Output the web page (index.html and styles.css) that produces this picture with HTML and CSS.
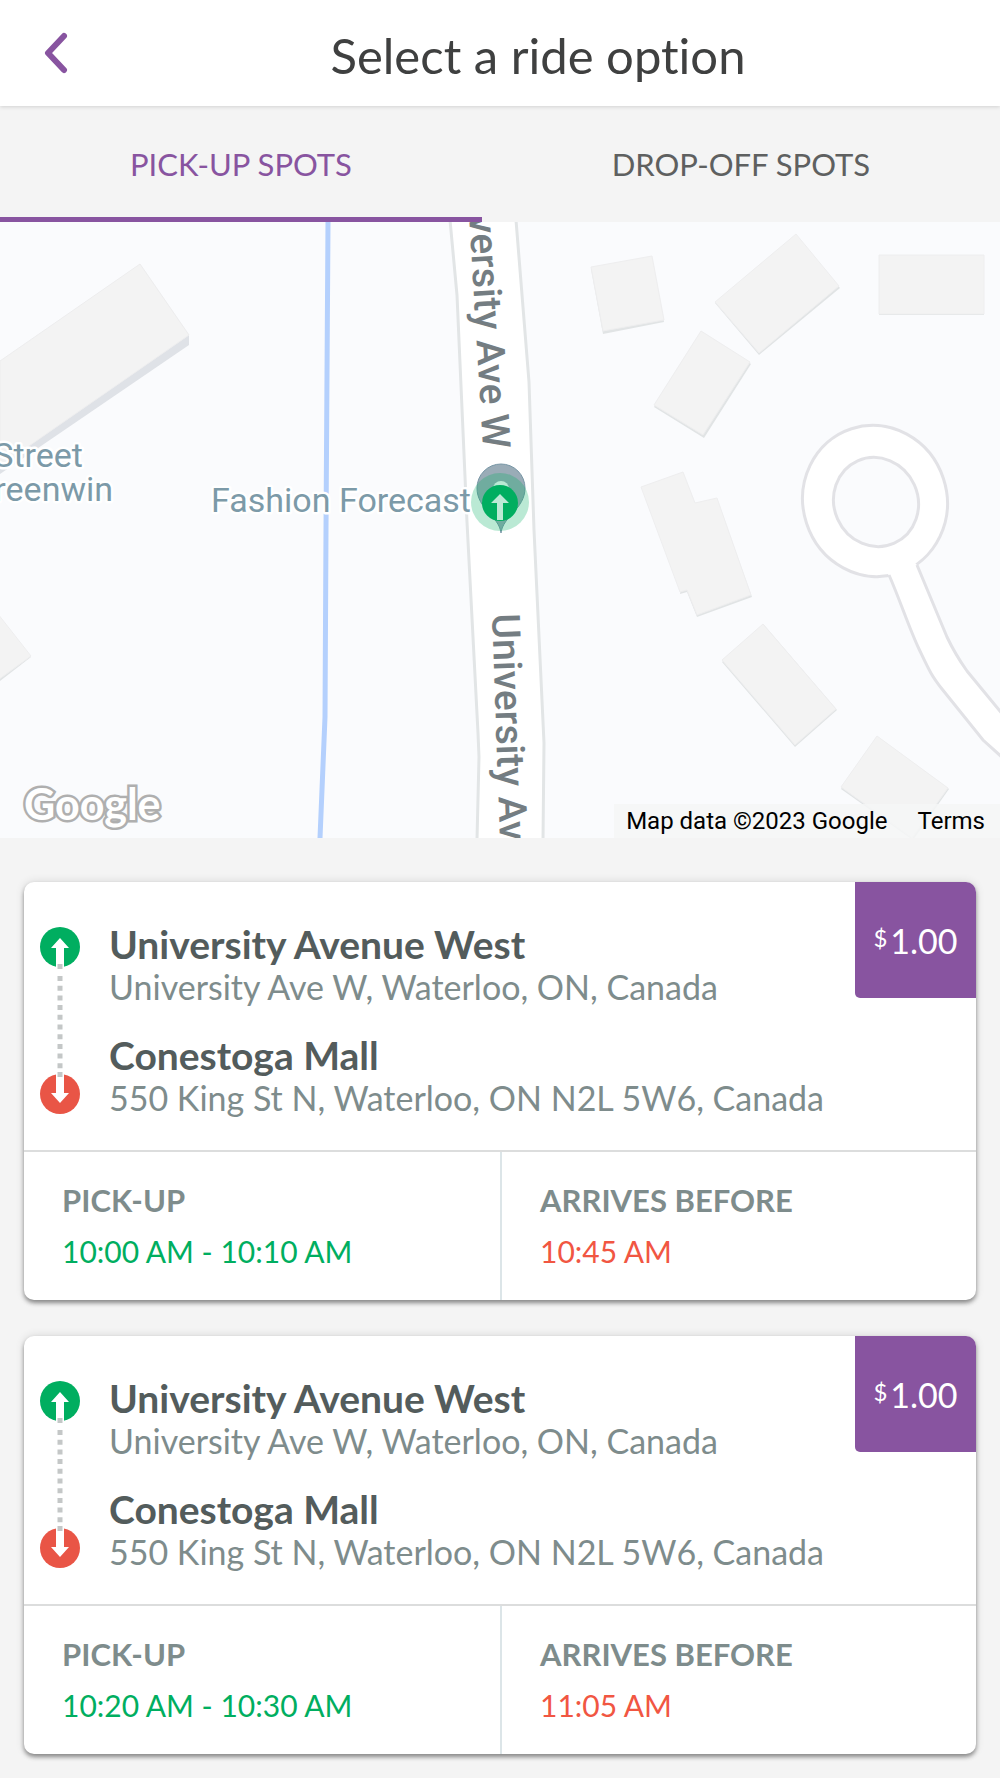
FILE: index.html
```html
<!DOCTYPE html>
<html lang="en">
<head>
<meta charset="utf-8">
<meta name="viewport" content="width=device-width, initial-scale=1">
<title>Select a ride option</title>
<link rel="stylesheet" href="styles.css">
</head>
<body>
<svg class="defs" aria-hidden="true">
  <symbol id="route" viewBox="0 0 40 188">
    <circle cx="20" cy="20" r="20" fill="#00ae60"/>
    <path d="M20 11 29 21H24V40H16V21H11Z" fill="#fff"/>
    <circle cx="20" cy="167" r="20" fill="#e95546"/>
    <path d="M20 176 29 166H24V147H16V166H11Z" fill="#fff"/>
    <path d="M20 37v5M20 49v96" stroke="#c4c7c7" stroke-width="5" stroke-dasharray="5 4.7" fill="none"/>
    <path d="M20 145v5" stroke="#c4c7c7" stroke-width="5"/>
  </symbol>
</svg>

<header class="header">
  <button class="back" type="button" aria-label="Back">
    <svg width="24" height="42" viewBox="0 0 24 42" aria-hidden="true"><path d="M20 4 4 21 20 38" fill="none" stroke="#8854a0" stroke-width="6" stroke-linecap="round" stroke-linejoin="round"/></svg>
  </button>
  <h1 class="title">Select a ride option</h1>
</header>

<nav class="tabs" role="tablist">
  <button class="tab tab-active" type="button" role="tab" aria-selected="true">PICK-UP SPOTS</button>
  <button class="tab" type="button" role="tab" aria-selected="false">DROP-OFF SPOTS</button>
</nav>

<main>
  <section class="map" aria-label="Map">
    <svg class="map-art" viewBox="0 0 1000 616" preserveAspectRatio="xMidYMid slice">
      <path d="M0 244 189 113V123L0 252Z" fill="#dfe2e7"/>
      <path d="M0 139 140 42 189 113 0 244Z" fill="#f3f3f3" stroke="#ededee"/>
      <g fill="#e1e4e5">
        <path d="M591 47 652 36 664 100 603 112Z"/>
        <path d="M715 81 796 14 840 66 759 133Z"/>
        <path d="M879 33H984V93H879Z"/>
        <path d="M702 110 751 142 704 216 654 185Z"/>
        <path d="M695 283 717 278 752 375 697 395 687 370 680 372Z"/>
        <path d="M764 403 837 488 795 525 722 440Z"/>
        <path d="M877 515 949 567 913 618 841 567Z"/>
        <path d="M0 396 31 435 0 459Z"/>
      </g>
      <g fill="#f3f3f3" stroke="#eeeeef">
        <path d="M591 45 652 34 664 98 603 109Z"/>
        <path d="M715 80 796 12 839 64 759 131Z"/>
        <path d="M879 33H984V92H879Z"/>
        <path d="M701 109 750 140 703 213 654 183Z"/>
        <path d="M641 265 683 250 695 281 717 276 751 373 697 393 687 368 680 370Z"/>
        <path d="M763 402 836 487 795 523 722 438Z"/>
        <path d="M877 514 948 566 912 616 841 565Z"/>
        <path d="M-2 392 31 434-2 458Z"/>
      </g>
      <path d="M328 0 326 308 325 495 320 616" fill="none" stroke="#b4d0fd" stroke-width="5"/>
      <path d="M450-2 457 73 467 300 478 511 479 535 477 618H543L544 521 534 308 529 160 516-2Z" fill="#fff" stroke="#e2e5e6" stroke-width="3"/>
      <ellipse cx="875" cy="279" rx="72" ry="76" transform="rotate(-18 875 279)" fill="#fff" stroke="#e2e2e6" stroke-width="3"/>
      <ellipse cx="876" cy="280" rx="42" ry="45" transform="rotate(-24 876 280)" fill="#fafbfd" stroke="#e2e2e6" stroke-width="3"/>
      <path d="M885 346 889 354C900 378 909 406 919 427S931 453 942 467L983 518 1004 537V494L967 449Q955 432 947 415L917 343 910 336Z" fill="#fff"/>
      <path d="M889 353C900 378 909 406 919 427S931 453 942 467L983 518 1004 537M1004 494 967 449Q955 432 947 415L917 343" fill="none" stroke="#e2e2e6" stroke-width="3"/>
      <g class="place">
        <text x="83" y="245" text-anchor="end">Street</text>
        <text x="113" y="279" text-anchor="end">Greenwin</text>
        <text x="471" y="290" text-anchor="end">Fashion Forecast</text>
      </g>
      <g class="road">
        <text transform="translate(483 227) rotate(86.6)" text-anchor="end">University Ave W</text>
        <text transform="translate(492 392) rotate(88)">University Ave W</text>
      </g>
      <path d="M501 311C499 294 477 287 477 266A24 24 0 0 1 525 266C525 287 503 294 501 311Z" fill="#9aacb7" stroke="#7897a6"/>
      <circle cx="501" cy="267" r="8" fill="#fff"/>
      <circle cx="500" cy="280" r="29" fill="#00ae60" fill-opacity=".27"/>
      <circle cx="500" cy="281" r="18" fill="#00ae60"/>
      <path d="M500 272 509 281H503V298H497V281H491Z" fill="#bce9d5"/>
      <text class="logo" x="24" y="598">Google</text>
    </svg>
    <div class="credit"><span>Map data ©2023 Google</span><a href="#terms">Terms</a></div>
  </section>

  <section class="rides" aria-label="Ride options">
    <article class="card">
      <div class="trip">
        <svg class="route" width="40" height="188" aria-hidden="true"><use href="#route"/></svg>
        <div class="stops">
          <div class="stop"><h2 class="name">University Avenue West</h2><p class="address">University Ave W, Waterloo, ON, Canada</p></div>
          <div class="stop"><h2 class="name">Conestoga Mall</h2><p class="address">550 King St N, Waterloo, ON N2L 5W6, Canada</p></div>
        </div>
        <p class="price"><span class="currency">$</span>1.00</p>
      </div>
      <dl class="times">
        <div class="time"><dt>PICK-UP</dt><dd class="pickup">10:00 AM - 10:10 AM</dd></div>
        <div class="time"><dt>ARRIVES BEFORE</dt><dd class="arrival">10:45 AM</dd></div>
      </dl>
    </article>
    <article class="card">
      <div class="trip">
        <svg class="route" width="40" height="188" aria-hidden="true"><use href="#route"/></svg>
        <div class="stops">
          <div class="stop"><h2 class="name">University Avenue West</h2><p class="address">University Ave W, Waterloo, ON, Canada</p></div>
          <div class="stop"><h2 class="name">Conestoga Mall</h2><p class="address">550 King St N, Waterloo, ON N2L 5W6, Canada</p></div>
        </div>
        <p class="price"><span class="currency">$</span>1.00</p>
      </div>
      <dl class="times">
        <div class="time"><dt>PICK-UP</dt><dd class="pickup">10:20 AM - 10:30 AM</dd></div>
        <div class="time"><dt>ARRIVES BEFORE</dt><dd class="arrival">11:05 AM</dd></div>
      </dl>
    </article>
  </section>
</main>
</body>
</html>
```
FILE: styles.css
```css
* { box-sizing: border-box; margin: 0; padding: 0; }

body {
  background: #f4f4f4;
  font-family: Lato, "Liberation Sans", sans-serif;
  font-variant-ligatures: none;
  color: #535c5c;
}

button { border: 0; background: none; font: inherit; cursor: pointer; }

.defs { display: none; }

.header {
  position: relative;
  display: flex;
  align-items: center;
  height: 106px;
  background: #fff;
  box-shadow: 0 1px 4px rgba(0, 0, 0, .14);
}

.back { display: flex; padding: 0 8px 0 44px; }

.title {
  flex: 1;
  padding-top: 4px;
  text-align: center;
  font-size: 49px;
  font-weight: 400;
  line-height: 58px;
  color: #3f4040;
}

.tabs { display: flex; height: 116px; }

.tab {
  flex: 1 1 auto;
  padding-top: 4px;
  border-bottom: 5px solid transparent;
  font-size: 31px;
  line-height: 40px;
  color: #5e6060;
}

.tab-active { border-color: #8854a0; color: #8854a0; }

.map { position: relative; height: 616px; overflow: hidden; background: #fafbfd; }

.map-art { display: block; width: 100%; height: 100%; }

.place, .road {
  font-family: Roboto, "Liberation Sans", sans-serif;
  stroke: #fff;
  stroke-width: 5px;
  stroke-linejoin: round;
  paint-order: stroke;
}

.place { font-size: 34px; fill: #7c9aa8; }

.road { font-size: 39px; font-weight: 500; fill: #747d82; }

.logo {
  font-family: Lato, sans-serif;
  font-size: 43px;
  font-weight: 700;
  fill: #fff;
  stroke: #afafaf;
  stroke-width: 5px;
  paint-order: stroke;
}

.credit {
  position: absolute;
  right: 0;
  bottom: 0;
  display: flex;
  gap: 30px;
  padding: 0 15px 0 12px;
  background: rgba(245, 246, 246, .85);
  font-family: Roboto, "Liberation Sans", sans-serif;
  font-size: 24px;
  line-height: 34px;
  color: #000;
}

.credit a { color: inherit; text-decoration: none; }

.rides { display: grid; gap: 36px; padding: 44px 24px 24px; }

.card {
  border-radius: 10px;
  background: #fff;
  box-shadow: 0 3px 4px rgba(0, 0, 0, .4), 0 0 10px rgba(0, 0, 0, .12);
}

.trip {
  display: flex;
  align-items: flex-start;
  height: 270px;
  border-bottom: 2px solid #dcdddd;
}

.route { flex: none; margin: 45px 29px 0 16px; }

.stops { flex: 1; display: grid; gap: 27px; padding-top: 41px; }

.name, .address { white-space: nowrap; }

.name { font-size: 39px; font-weight: 700; line-height: 43px; }

.address { font-size: 34px; font-weight: 400; line-height: 41px; color: #7e8c8c; }

.price {
  flex: none;
  display: flex;
  align-items: center;
  justify-content: center;
  gap: 3px;
  width: 121px;
  height: 116px;
  padding-top: 2px;
  border-radius: 0 10px 0 5px;
  background: #8854a0;
  font-size: 34px;
  line-height: 44px;
  color: #fff;
}

.currency { font-size: 24px; line-height: 32px; padding-bottom: 6px; }

.times { display: grid; grid-template-columns: 1fr 1fr; }

.time { height: 148px; padding: 28px 38px; line-height: 40px; font-size: 31px; }

.time + .time { border-left: 2px solid #dce5e8; }

.time dt { font-weight: 700; color: #7e8c8c; }

.time dd { padding-top: 11px; font-size: 30px; }

.pickup { color: #00ae60; }

.arrival { color: #f15642; }
```
